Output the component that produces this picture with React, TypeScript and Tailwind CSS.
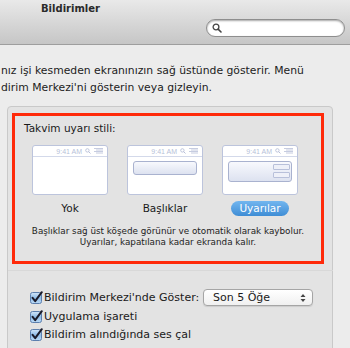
import React from "react";

const F = { fontFamily: '"Lucida Grande", "DejaVu Sans", "Liberation Sans", sans-serif' };

function Check() {
  return (
    <svg width="14" height="14" viewBox="0 0 14 14" className="shrink-0">
      <defs>
        <linearGradient id="cb" x1="0" y1="0" x2="0" y2="1">
          <stop offset="0" stopColor="#d3e6f9" />
          <stop offset="0.5" stopColor="#8fbde9" />
          <stop offset="1" stopColor="#bcdaf6" />
        </linearGradient>
      </defs>
      <rect x="0.5" y="1.5" width="11" height="11" rx="2" fill="url(#cb)" stroke="#5c7fae" />
      <path d="M2.6 6.8 L5.2 10.2 L11.8 1.2" fill="none" stroke="#1b1b2a" strokeWidth="2" strokeLinecap="round" strokeLinejoin="round" />
    </svg>
  );
}

function MiniBar() {
  return (
    <div className="flex h-[11px] items-center justify-end gap-[3px] border-b border-[#d3d9ea] pr-[4px]">
      <span className="text-[7px] leading-none text-[#b7bfd8]" style={{ fontFamily: '"Liberation Sans", sans-serif' }}>9:41 AM</span>
      <svg width="6" height="6" viewBox="0 0 6 6">
        <circle cx="2.4" cy="2.4" r="1.7" fill="none" stroke="#b7bfd8" strokeWidth="0.9" />
        <path d="M3.6 3.6 L5.5 5.5" stroke="#b7bfd8" strokeWidth="1" />
      </svg>
      <svg width="9" height="6" viewBox="0 0 9 6">
        <path d="M0 0.5H9M2 2H9M0 3.5H9M2 5H9" stroke="#b7bfd8" strokeWidth="0.8" />
      </svg>
    </div>
  );
}

function Preview({ kind }: { kind: "none" | "banner" | "alert" }) {
  return (
    <div className="h-[50px] w-[76px] rounded-[3px] border border-[#bcc4dc] bg-white">
      <MiniBar />
      {kind === "banner" && (
        <div className="mx-[5px] mt-[4px] h-[14px] rounded-[3px] border border-[#a9b2cf] bg-gradient-to-b from-[#f8f9fd] to-[#dde2f0]" />
      )}
      {kind === "alert" && (
        <div className="mx-[5px] mt-[4px] flex h-[21px] justify-end rounded-[3px] border border-[#a9b2cf] bg-gradient-to-b from-[#f8f9fd] to-[#dde2f0] pr-[1px] pt-[2px]">
          <div className="flex flex-col gap-[2px]">
            <div className="h-[6px] w-[17px] rounded-[1px] border border-[#b8c0da] bg-[#eef0f8]" />
            <div className="h-[6px] w-[17px] rounded-[1px] border border-[#b8c0da] bg-[#eef0f8]" />
          </div>
        </div>
      )}
    </div>
  );
}

export default function App() {
  return (
    <div className="h-[348px] w-[350px] overflow-hidden bg-[#ececec] text-[#1a1a1a]" style={F}>
      <div className="relative h-[45px] border-b border-[#9e9e9e] bg-gradient-to-b from-[#e9e9e9] to-[#c6c6c6]">
        <div className="pl-[41px] pt-[2px] text-[10px] font-bold leading-[14px] text-[#2a2a2a]">Bildirimler</div>
        <div className="absolute left-[206px] top-[19px] flex h-[18px] w-[139px] items-center rounded-full border border-[#8e8e8e] bg-white pl-[5px] shadow-[inset_0_1px_2px_rgba(0,0,0,0.35)]">
          <svg width="10" height="10" viewBox="0 0 10 10">
            <circle cx="4" cy="4" r="2.9" fill="none" stroke="#444" strokeWidth="1.3" />
            <path d="M6.1 6.1 L9 9" stroke="#444" strokeWidth="1.6" strokeLinecap="round" />
          </svg>
        </div>
      </div>

      <div className="pl-[1px] pt-[17px] text-[10.8px] leading-[17px] text-[#222]">
        <div>nız işi kesmeden ekranınızın sağ üstünde gösterir. Menü</div>
        <div>dirim Merkezi'ni gösterin veya gizleyin.</div>
      </div>

      <div className="ml-[7px] mt-[10px] h-[300px] w-[326px] rounded-[4px] border border-[#c9c9c9] bg-[#e3e3e3] pl-[4px] pt-[6px]">
        <div className="flex h-[151px] w-[312px] flex-col border-[3px] border-[#ff2a0a]">
          <div className="pl-[9px] pt-[5px] text-[10.5px] leading-[15px]">Takvim uyarı stili:</div>
          <div className="mt-[9px] flex gap-[19px] pl-[17px]">
            <div className="flex flex-col items-center">
              <Preview kind="none" />
              <div className="mt-[5px] text-[10.5px] leading-[16px]">Yok</div>
            </div>
            <div className="flex flex-col items-center">
              <Preview kind="banner" />
              <div className="mt-[5px] text-[10.5px] leading-[16px]">Başlıklar</div>
            </div>
            <div className="flex flex-col items-center">
              <Preview kind="alert" />
              <div className="mt-[6px] flex h-[15px] w-[58px] items-center justify-center rounded-full bg-gradient-to-b from-[#72b6ef] to-[#3e8dd5] text-[10.5px] leading-[15px] text-white">Uyarılar</div>
            </div>
          </div>
          <div className="mt-[10px] text-center text-[8.8px] leading-[10.5px] text-[#222]">
            <div>Başlıklar sağ üst köşede görünür ve otomatik olarak kaybolur.</div>
            <div>Uyarılar, kapatılana kadar ekranda kalır.</div>
          </div>
        </div>
        <div className="ml-[-4px] mt-[6px] h-px w-[325px] bg-[#d8d8d8]" />
        <div className="pl-[18px] pt-[18px] text-[11px] leading-[16px]">
          <div className="flex h-[17px] items-center">
            <Check />
            <span className="w-[159px] whitespace-nowrap">Bildirim Merkezi'nde Göster:</span>
            <div className="flex h-[17px] w-[110px] items-center justify-between rounded-[4px] border border-[#a5a5a5] bg-gradient-to-b from-white to-[#f0f0f0] pl-[9px] pr-[6px] shadow-[0_1px_1px_rgba(0,0,0,0.1)]">
              <span>Son 5 Öğe</span>
              <svg width="6" height="10" viewBox="0 0 6 10">
                <path d="M3 1 L5.5 4 H0.5 Z M3 9 L5.5 6 H0.5 Z" fill="#444" />
              </svg>
            </div>
          </div>
          <div className="mt-[3px] flex h-[16px] items-center">
            <Check />
            <span>Uygulama işareti</span>
          </div>
          <div className="mt-[2px] flex h-[16px] items-center">
            <Check />
            <span>Bildirim alındığında ses çal</span>
          </div>
        </div>
      </div>
    </div>
  );
}
